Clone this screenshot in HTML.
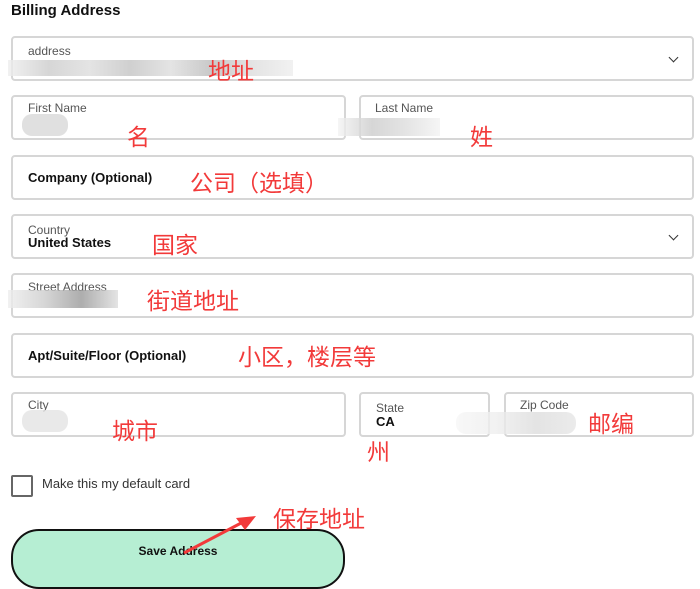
<!DOCTYPE html>
<html><head><meta charset="utf-8"><style>
body{margin:0;width:700px;height:572px;overflow:hidden;background:#fff;font-family:"Liberation Sans",sans-serif;position:relative}
.a{position:absolute}
.box{position:absolute;border:2px solid #d6d6d6;border-radius:4px;box-sizing:border-box}
.lbl{position:absolute;font-size:12px;color:#555}
.val{position:absolute;font-size:13px;font-weight:bold;color:#111}
.ph{position:absolute;font-size:13px;font-weight:bold;color:#111}
.red{position:absolute;color:#f23a3a;font-size:23px;font-family:"Liberation Sans","Noto Sans CJK SC",sans-serif;line-height:26px;white-space:nowrap}
.chev{position:absolute;width:6px;height:6px;border-right:1.5px solid #333;border-bottom:1.5px solid #333;transform:rotate(45deg)}
.blur{position:absolute;background:#d8d8d8;opacity:.8}
</style></head><body>
<div class="a" style="left:11px;top:2px;font-size:15px;font-weight:bold;color:#111">Billing Address</div>

<div class="box" style="left:11px;top:36px;width:683px;height:45px"></div>
<div class="lbl" style="left:28px;top:44px">address</div>
<div class="blur" style="left:8px;top:60px;width:285px;height:16px;background:linear-gradient(90deg,#eee,#ccc,#ddd,#c4c4c4,#ddd,#bbb,#ddd,#eee)"></div>
<div class="chev" style="left:670px;top:54px"></div>
<div class="red" style="left:208px;top:58px">地址</div>

<div class="box" style="left:11px;top:95px;width:335px;height:45px"></div>
<div class="lbl" style="left:28px;top:101px">First Name</div>
<div class="blur" style="left:22px;top:114px;width:46px;height:22px;border-radius:10px"></div>
<div class="red" style="left:127px;top:124px">名</div>

<div class="box" style="left:359px;top:95px;width:335px;height:45px"></div>
<div class="lbl" style="left:375px;top:101px">Last Name</div>
<div class="blur" style="left:338px;top:118px;width:102px;height:18px;background:linear-gradient(90deg,#f3f3f3,#ccc,#ddd,#f3f3f3)"></div>
<div class="red" style="left:470px;top:124px">姓</div>

<div class="box" style="left:11px;top:155px;width:683px;height:45px"></div>
<div class="ph" style="left:28px;top:170px">Company (Optional)</div>
<div class="red" style="left:190px;top:170px">公司（选填）</div>

<div class="box" style="left:11px;top:214px;width:683px;height:45px"></div>
<div class="lbl" style="left:28px;top:223px">Country</div>
<div class="val" style="left:28px;top:235px">United States</div>
<div class="chev" style="left:670px;top:232px"></div>
<div class="red" style="left:152px;top:232px">国家</div>

<div class="box" style="left:11px;top:273px;width:683px;height:45px"></div>
<div class="lbl" style="left:28px;top:280px">Street Address</div>
<div class="blur" style="left:8px;top:290px;width:110px;height:18px;background:linear-gradient(90deg,#eee,#ccc,#999,#ddd)"></div>
<div class="red" style="left:147px;top:288px">街道地址</div>

<div class="box" style="left:11px;top:333px;width:683px;height:45px"></div>
<div class="ph" style="left:28px;top:348px">Apt/Suite/Floor (Optional)</div>
<div class="red" style="left:238px;top:344px">小区，楼层等</div>

<div class="box" style="left:11px;top:392px;width:335px;height:45px"></div>
<div class="lbl" style="left:28px;top:398px">City</div>
<div class="blur" style="left:22px;top:410px;width:46px;height:22px;border-radius:10px;background:#e4e4e4"></div>
<div class="red" style="left:112px;top:418px">城市</div>

<div class="box" style="left:359px;top:392px;width:131px;height:45px"></div>
<div class="lbl" style="left:376px;top:401px">State</div>
<div class="val" style="left:376px;top:414px">CA</div>
<div class="red" style="left:367px;top:439px">州</div>

<div class="box" style="left:504px;top:392px;width:190px;height:45px"></div>
<div class="lbl" style="left:520px;top:398px">Zip Code</div>
<div class="blur" style="left:456px;top:412px;width:120px;height:22px;border-radius:10px;background:linear-gradient(90deg,#f6f6f6,#eee,#ddd,#e6e6e6)"></div>
<div class="red" style="left:588px;top:411px">邮编</div>

<div class="box" style="left:11px;top:475px;width:22px;height:22px;border-color:#666;border-radius:2px"></div>
<div class="a" style="left:42px;top:476px;font-size:13px;color:#333">Make this my default card</div>

<div class="a" style="left:11px;top:529px;width:334px;height:60px;border:2px solid #111;border-radius:28px;background:#b6eed3;box-sizing:border-box"></div>
<div class="a" style="left:11px;top:544px;width:334px;text-align:center;font-size:12px;font-weight:bold;color:#111">Save Address</div>
<svg class="a" style="left:0;top:0" width="700" height="572"><line x1="184" y1="553" x2="245" y2="521" stroke="#f23a3a" stroke-width="3"/><polygon points="256,516 236,518 245,530" fill="#f23a3a"/></svg>
<div class="red" style="left:273px;top:506px">保存地址</div>
</body></html>
